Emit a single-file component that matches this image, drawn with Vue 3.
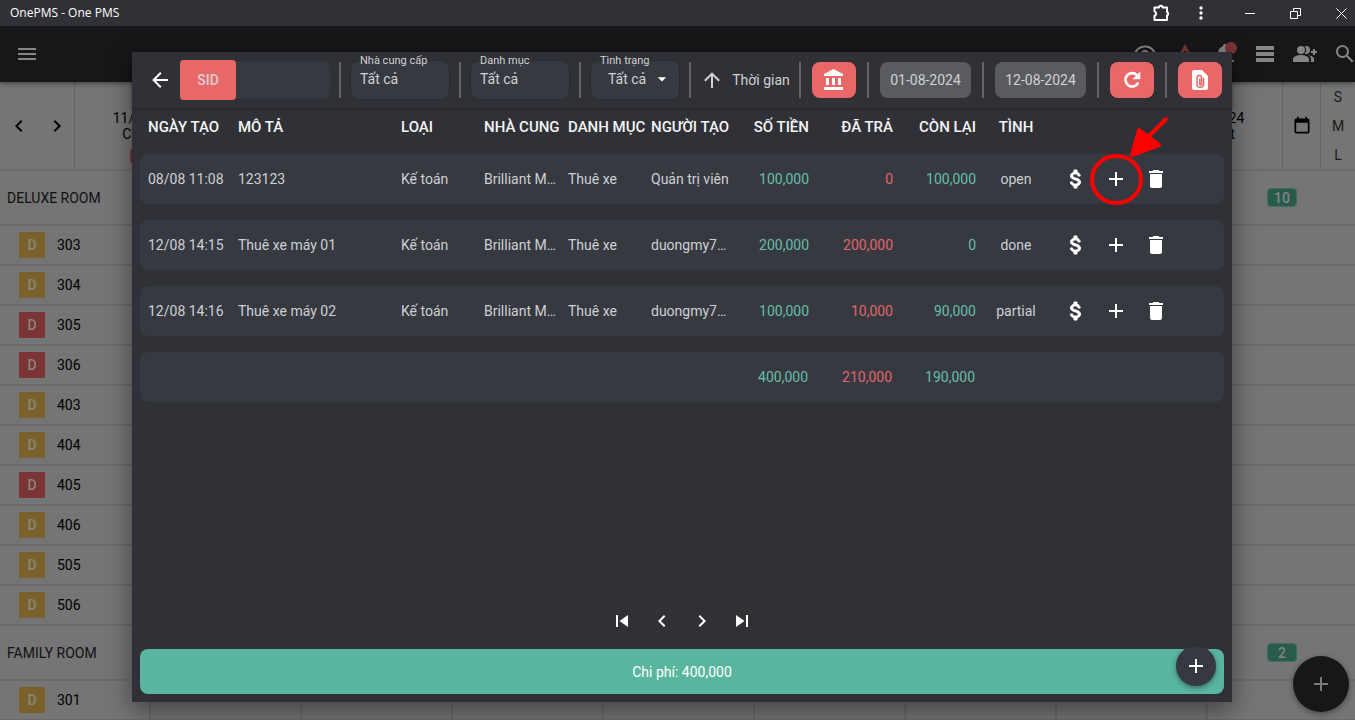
<script setup>
import { ref } from 'vue'

const icons = {
  menu: 'M3 6h18v2H3V6m0 5h18v2H3v-2m0 5h18v2H3v-2z',
  back: 'M20 11v2H8l5.5 5.5-1.42 1.42L4.16 12l7.92-7.92L13.5 5.5 8 11h12z',
  up: 'M13 20h-2V8l-5.5 5.5-1.42-1.42L12 4.16l7.92 7.92-1.42 1.42L13 8v12z',
  left: 'M15.41 16.58L10.83 12l4.58-4.59L14 6l-6 6 6 6 1.41-1.42z',
  right: 'M8.59 16.58L13.17 12 8.59 7.41 10 6l6 6-6 6-1.41-1.42z',
  first: 'M6 18V6h2v12H6m3.5-6L18 6v12l-8.5-6z',
  last: 'M16 18h2V6h-2M6 18l8.5-6L6 6v12z',
  bank: 'M11.5 1L2 6v2h19V6M16 10v7h3v-7M2 22h19v-3H2m8-9v7h3v-7M4 10v7h3v-7H4z',
  dollar: 'M11.8 10.9c-2.27-.59-3-1.2-3-2.15 0-1.09 1.01-1.85 2.7-1.85 1.78 0 2.44.85 2.5 2.1h2.21c-.07-1.72-1.12-3.3-3.21-3.81V3h-3v2.16c-1.94.42-3.5 1.68-3.5 3.61 0 2.31 1.91 3.46 4.7 4.13 2.5.6 3 1.48 3 2.41 0 .69-.49 1.79-2.7 1.79-2.06 0-2.87-.92-2.98-2.1h-2.2c.12 2.19 1.76 3.42 3.68 3.83V21h3v-2.15c1.95-.37 3.5-1.5 3.5-3.55 0-2.84-2.43-3.81-4.7-4.4z',
  plus: 'M19 13h-6v6h-2v-6H5v-2h6V5h2v6h6v2z',
  trash: 'M19 4h-3.5l-1-1h-5l-1 1H5v2h14M6 19a2 2 0 0 0 2 2h8a2 2 0 0 0 2-2V7H6v12z',
  calendar: 'M19 19H5V8h14m0-5h-1V1h-2v2H8V1H6v2H5c-1.11 0-2 .89-2 2v14a2 2 0 0 0 2 2h14a2 2 0 0 0 2-2V5a2 2 0 0 0-2-2z',
  eye: 'M12 8a4 4 0 1 1 0 8 4 4 0 0 1 0-8m0-4.500c5 0 9.270 3.110 11 7.500-1.730 4.390-6 8.500-11 8.500S2.730 15.390 1 11C2.730 6.610 7 3.500 12 3.500m0 2c-3.790 0-7 2.200-8.600 5.500C5 14.300 8.200 17 12 17s7-2.700 8.600-6C19 7.700 15.800 5.500 12 5.500z',
  alert: 'M13 14h-2V9h2m0 9h-2v-2h2M1 21h22L12 2 1 21z',
  bell: 'M21 19v1H3v-1l2-2v-6c0-3.100 2.030-5.830 5-6.710V4a2 2 0 0 1 4 0v.29c2.970.88 5 3.610 5 6.710v6l2 2m-7 2a2 2 0 0 1-4 0',
  list: 'M3 4h18v4H3V4m0 6h18v4H3v-4m0 6h18v4H3v-4z',
  people: 'M24 9h-2V7h-2v2h-2v2h2v2h2v-2h2M8 4a4 4 0 1 0 0 8 4 4 0 0 0 0-8m5 0c-.5 0-.9.1-1.300.2a6 6 0 0 1 0 7.600c.4.1.8.2 1.300.2a4 4 0 0 0 0-8M8 13c-2.670 0-8 1.340-8 4v3h16v-3c0-2.660-5.330-4-8-4m7.600.2c1.400.9 2.400 2.100 2.400 3.800v3h3v-3c0-2.100-2.800-3.300-5.400-3.800z',
  search: 'M9.500 3A6.500 6.500 0 0 1 16 9.500c0 1.610-.59 3.090-1.560 4.230l.27.27h.79l5 5-1.500 1.500-5-5v-.79l-.27-.27A6.500 6.500 0 1 1 9.500 3m0 2a4.500 4.500 0 1 0 0 9 4.500 4.500 0 0 0 0-9z',
  caret: 'M7 10l5 5 5-5H7z',
  dots: 'M12 16a2 2 0 1 1 0 4 2 2 0 0 1 0-4m0-6a2 2 0 1 1 0 4 2 2 0 0 1 0-4m0-6a2 2 0 1 1 0 4 2 2 0 0 1 0-4z'
}

const sid = ref('')
const supplier = ref('Tất cả')
const category = ref('Tất cả')
const status = ref('all')

const appActions = [
  { id: 'eye', label: 'Xem' },
  { id: 'alert', label: 'Cảnh báo' },
  { id: 'bell', label: 'Thông báo' },
  { id: 'list', label: 'Danh sách' },
  { id: 'people', label: 'Thêm khách' },
  { id: 'search', label: 'Tìm kiếm' }
]

const days = [['11/08/2024', 'Chủ nhật'], [], [], [], [], [], [], ['18/08/2024', 'Chủ nhật']]

const groups = [
  {
    name: 'DELUXE ROOM', free: 10,
    rooms: [['303'], ['304'], ['305', 1], ['306', 1], ['403'], ['404'], ['405', 1], ['406'], ['505'], ['506']]
  },
  { name: 'FAMILY ROOM', free: 2, rooms: [['301']] }
]

const headers = ['NGÀY TẠO', 'MÔ TẢ', 'LOẠI', 'NHÀ CUNG', 'DANH MỤC', 'NGƯỜI TẠO', 'SỐ TIỀN', 'ĐÃ TRẢ', 'CÒN LẠI', 'TÌNH']
const rows = [
  ['08/08 11:08', '123123', 'Kế toán', 'Brilliant Motor', 'Thuê xe', 'Quản trị viên', '100,000', '0', '100,000', 'open'],
  ['12/08 14:15', 'Thuê xe máy 01', 'Kế toán', 'Brilliant Motor', 'Thuê xe', 'duongmy7100', '200,000', '200,000', '0', 'done'],
  ['12/08 14:16', 'Thuê xe máy 02', 'Kế toán', 'Brilliant Motor', 'Thuê xe', 'duongmy7100', '100,000', '10,000', '90,000', 'partial']
]
const rowActions = [['dollar', 'Thanh toán'], ['plus', 'Thêm'], ['trash', 'Xóa']]
const pager = [['first', 'Trang đầu'], ['left', 'Trang trước'], ['right', 'Trang sau'], ['last', 'Trang cuối']]

const cellClass = (i) => ({ num: i > 5 && i < 9, paid: i === 7, status: i === 9 })
</script>

<template>
  <div class="window">
    <header class="titlebar">
      <span class="title">OnePMS - One PMS</span>
      <button class="ext" aria-label="Tiện ích">
        <svg width="20" height="20" viewBox="0 0 20 20" fill="none" stroke="#fff" stroke-width="2" stroke-linejoin="round">
          <path d="M3.500 4.500h4.500a1.800 1.800 0 0 1 3.600 0h4.400v4.500a1.800 1.800 0 0 1 0 3.400v4.600h-12.500v-4.200a2.300 2.300 0 0 0 0-4.400z" />
        </svg>
      </button>
      <button class="ext" aria-label="Menu"><svg width="20" height="20" viewBox="0 0 24 24"><path :d="icons.dots" /></svg></button>
      <button class="win" aria-label="Thu nhỏ"><svg width="11" height="11"><path d="M0 5h10v1H0z" /></svg></button>
      <button class="win" aria-label="Khôi phục">
        <svg width="11" height="11" fill="none" stroke="#fff"><path d="M.5 3.500h7v7h-7zM3.500 3.500v-3h7v7h-3" /></svg>
      </button>
      <button class="win close" aria-label="Đóng">
        <svg width="11" height="11" stroke="#fff"><path d="M.5.5l10 10M10.500.5l-10 10" /></svg>
      </button>
    </header>

    <div class="stage">
      <div class="board">
        <nav class="appbar">
          <button class="appbtn" aria-label="Menu chính"><svg class="i" viewBox="0 0 24 24"><path :d="icons.menu" /></svg></button>
          <span class="grow"></span>
          <button v-for="a in appActions" :key="a.id" class="appbtn" :class="a.id" :aria-label="a.label">
            <svg class="i" viewBox="0 0 24 24"><path :d="icons[a.id]" /></svg>
            <span v-if="a.id === 'bell'" class="dot"></span>
          </button>
        </nav>

        <div class="days">
          <div class="arrows">
            <button aria-label="Tuần trước"><svg class="i" viewBox="0 0 24 24"><path :d="icons.left" /></svg></button>
            <button aria-label="Tuần sau"><svg class="i" viewBox="0 0 24 24"><path :d="icons.right" /></svg></button>
          </div>
          <div v-for="(d, i) in days" :key="i" class="day">
            <span>{{ d[0] }}</span><span>{{ d[1] }}</span>
            <span v-if="i === 0" class="daybadge"></span>
          </div>
          <button class="cal" aria-label="Chọn ngày"><svg viewBox="0 0 24 24"><path :d="icons.calendar" /></svg></button>
          <div class="sizes"><button>S</button><button>M</button><button>L</button></div>
        </div>

        <template v-for="g in groups" :key="g.name">
          <div class="group">
            <span class="gname">{{ g.name }}</span>
            <span class="free">{{ g.free }}</span>
          </div>
          <div v-for="r in g.rooms" :key="r[0]" class="room">
            <div class="rname"><span class="tag" :class="{ busy: r[1] }">D</span>{{ r[0] }}</div>
            <div v-for="(d, i) in days" :key="i" class="slot"></div>
          </div>
        </template>
      </div>

      <button class="pagefab" aria-label="Tạo mới"><svg class="i" viewBox="0 0 24 24"><path :d="icons.plus" /></svg></button>

      <section class="dialog" role="dialog" aria-label="Chi phí">
        <div class="toolbar">
          <button class="back" aria-label="Quay lại"><svg class="i" viewBox="0 0 24 24"><path :d="icons.back" /></svg></button>
          <div class="searchbox">
            <button class="sid">SID</button>
            <input v-model="sid" type="text" aria-label="SID" />
          </div>
          <i class="sep"></i>
          <div class="field">
            <label for="supplier">Nhà cung cấp</label>
            <input id="supplier" v-model="supplier" type="text" />
          </div>
          <i class="sep"></i>
          <div class="field">
            <label for="category">Danh mục</label>
            <input id="category" v-model="category" type="text" />
          </div>
          <i class="sep"></i>
          <div class="field short">
            <label for="status">Tình trạng</label>
            <select id="status" v-model="status"><option value="all">Tất cả</option></select>
            <svg class="caret" viewBox="0 0 24 24"><path :d="icons.caret" /></svg>
          </div>
          <i class="sep"></i>
          <button class="sort"><svg class="i" viewBox="0 0 24 24"><path :d="icons.up" /></svg>Thời gian</button>
          <i class="sep endl"></i>
          <button class="red" aria-label="Ngân hàng"><svg class="i" viewBox="0 0 24 24"><path :d="icons.bank" /></svg></button>
          <i class="sep wide"></i>
          <button class="date">01-08-2024</button>
          <i class="sep wide"></i>
          <button class="date">12-08-2024</button>
          <i class="sep wide"></i>
          <button class="red" aria-label="Tải lại">
            <svg class="i" viewBox="0 0 24 24" fill="none"><path d="M18.300 14.500a6.700 6.700 0 1 1-1.300-7.300" fill="none" stroke="#fff" stroke-width="2.600" /><path d="M20.300 3.500v7.800h-7.800z" /></svg>
          </button>
          <i class="sep wide"></i>
          <button class="red" aria-label="Tệp đính kèm">
            <svg class="i" viewBox="0 0 24 24">
              <path d="M6 2h8l6 6v12a2 2 0 0 1-2 2H6a2 2 0 0 1-2-2V4a2 2 0 0 1 2-2z" />
              <path d="M11.800 10.500v5.700a.9.9 0 0 0 1.800 0V9.700a2.300 2.300 0 0 0-4.600 0v6.200a3.300 3.300 0 0 0 6.600 0v-6" fill="none" stroke="#ea6767" stroke-width="1.500" />
            </svg>
          </button>
        </div>

        <table>
          <thead>
            <tr>
              <th v-for="(h, i) in headers" :key="h" :class="cellClass(i)">{{ h }}</th>
            </tr>
          </thead>
          <tbody>
            <tr v-for="r in rows" :key="r[0]">
              <td v-for="(c, i) in r" :key="i" :class="cellClass(i)">{{ c }}</td>
              <td v-for="a in rowActions" :key="a[0]" class="act">
                <button :aria-label="a[1]"><svg class="i" :class="a[0]" viewBox="0 0 24 24"><path :d="icons[a[0]]" /></svg></button>
              </td>
            </tr>
            <tr class="total">
              <td class="blank"></td>
              <td class="num">400,000</td><td class="num paid">210,000</td><td class="num">190,000</td>
            </tr>
          </tbody>
        </table>

        <div class="pager">
          <button v-for="p in pager" :key="p[0]" :aria-label="p[1]"><svg class="i" viewBox="0 0 24 24"><path :d="icons[p[0]]" /></svg></button>
        </div>

        <div class="sum">Chi phí: 400,000</div>
        <button class="fab" aria-label="Thêm chi phí"><svg class="i" viewBox="0 0 24 24"><path :d="icons.plus" /></svg></button>

        <svg class="mark" width="84" height="92" viewBox="0 0 84 92" fill="none" stroke="#f00" stroke-width="4" stroke-linecap="round" stroke-linejoin="round">
          <ellipse cx="28.500" cy="65.500" rx="24.500" ry="23.500" />
          <path d="M78 5L61 22" />
          <path d="M51 16L71 31L44 41z" fill="#f00" />
        </svg>
      </section>
    </div>
  </div>
</template>

<style>
html, body, #app { height: 100%; }
body { margin: 0; overflow: hidden; }
</style>

<style scoped>
.window {
  height: 100%;
  display: flex;
  flex-direction: column;
  font: 14px/16px Roboto, "Noto Sans", sans-serif;
  color: #000;
}
button {
  font: inherit;
  color: inherit;
  background: none;
  border: 0;
  padding: 0;
  display: flex;
  align-items: center;
  justify-content: center;
}
svg { fill: currentColor; flex: none; display: block; }
svg[fill="none"] { fill: none; }
.i { width: 24px; height: 24px; }
.i path:not([fill]) { fill: currentColor; }

.titlebar {
  height: 26px;
  flex: none;
  display: flex;
  align-items: center;
  background: #303136;
  color: #fff;
}
.title { flex: 1; padding-left: 10px; font: 12px/16px "Open Sans", "Noto Sans", sans-serif; }
.ext { width: 40px; height: 26px; }
.win { width: 45px; height: 26px; }
.ext + .win { margin-left: 7px; }
.close { width: 28px; margin-left: 9px; }

.stage { position: relative; flex: 1; min-height: 0; overflow: hidden; background: #757575; }
.board { display: flex; flex-direction: column; height: 100%; overflow: hidden; }
.appbar {
  position: relative;
  height: 56px;
  flex: none;
  display: flex;
  align-items: center;
  padding-left: 7px;
  background: #171719;
  color: #858585;
  box-shadow: 0 1px 5px rgba(0, 0, 0, .5);
}
.grow { flex: 1; }
.appbtn { position: relative; width: 40px; height: 40px; flex: none; }
.search { margin-right: -10px; }
.alert { color: #7a3434; }
.dot { position: absolute; top: 8px; right: 8px; width: 12px; height: 12px; border-radius: 50%; background: #7a3434; }

.days { height: 87px; flex: none; display: flex; border-bottom: 2px solid #6b6b6b; }
.arrows { width: 75px; flex: none; display: flex; align-items: center; justify-content: space-between; padding: 0 5px 0 7px; box-sizing: border-box; border-right: 1px solid #626262; }
.day {
  flex: 1;
  display: flex;
  flex-direction: column;
  align-items: center;
  padding-top: 28px;
  border-right: 1px solid #626262;
}
.daybadge { width: 40px; height: 16px; margin-top: 6px; border-radius: 4px; background: #7a3434; }
.cal { width: 38px; border-right: 1px solid #626262; box-sizing: border-box; }
.cal svg { width: 20px; height: 20px; }
.sizes { width: 34px; display: flex; flex-direction: column; }
.sizes button { flex: 1; color: #1a1a1a; }

.group { height: 53px; flex: none; display: flex; align-items: center; justify-content: space-between; border-bottom: 2px solid #6b6b6b; padding: 0 58px 0 7px; color: #111; }
.free { width: 30px; height: 19px; box-sizing: border-box; border: 1px solid #3c6d60; border-radius: 4px; background: #295b4d; color: #858585; line-height: 18px; text-align: center; font-weight: 500; }
.room { height: 40px; flex: none; display: flex; box-sizing: border-box; border-bottom: 2px solid #6b6b6b; }
.rname { width: 149px; flex: none; display: flex; align-items: center; padding-left: 19px; box-sizing: border-box; }
.tag { width: 26px; height: 26px; margin-right: 12px; background: #7a612c; color: #8a8578; line-height: 26px; text-align: center; font-weight: 500; }
.tag.busy { background: #7a3434; }
.slot { width: 149px; flex: none; border-left: 2px solid #6b6b6b; }

.pagefab { position: absolute; right: 6px; bottom: 8px; width: 56px; height: 56px; border-radius: 50%; background: #171719; color: #7b7b7b; box-shadow: 0 2px 6px rgba(0, 0, 0, .4); }

.dialog {
  position: absolute;
  inset: 26px 123px 18px 132px;
  display: flex;
  flex-direction: column;
  background: #303136;
  color: #fff;
  box-shadow: 0 8px 24px rgba(0, 0, 0, .45);
}
.toolbar {
  height: 56px;
  flex: none;
  display: flex;
  align-items: center;
  padding-right: 10px;
  color: #d0d1d3;
  box-shadow: 0 1px 3px rgba(0, 0, 0, .35);
}
.back { width: 24px; margin: 0 8px 0 16px; color: #fff; }
.searchbox { flex: 1; min-width: 0; display: flex; align-items: center; }
.searchbox input { flex: 1; min-width: 0; height: 38px; box-sizing: border-box; border: 0; border-radius: 0 8px 8px 0; background: #373941; color: inherit; font: inherit; }
.sid { width: 56px; height: 40px; border-radius: 4px; background: #ea6767; font-weight: 500; color: #d6cfd0; }
.sep { width: 2px; height: 36px; flex: none; margin: 0 9px; background: #636468; }
.sep.endl { margin: 0 11px 0 9px; }
.sep.wide { margin: 0 11px; }
.field { position: relative; width: 100px; height: 40px; flex: none; }
.field.short { width: 90px; }
.field input, .field select {
  width: 100%;
  height: 100%;
  box-sizing: border-box;
  appearance: none;
  padding: 0 9px 2px;
  border: 1px solid #2b2c31;
  border-radius: 8px;
  background: #373941;
  color: inherit;
  font: inherit;
}
.field select { padding-left: 17px; }
.field label { position: absolute; left: 6px; top: -5px; padding: 0 4px; font-size: 11px; line-height: 12px; background: linear-gradient(#303136 60%, #373941 60%); }
.caret { position: absolute; right: 8px; top: 9px; width: 20px; height: 20px; color: #fff; pointer-events: none; }
.sort { width: 90px; flex: none; gap: 8px; white-space: nowrap; }
.red { width: 44px; height: 36px; flex: none; border-radius: 8px; background: #ea6767; color: #fff; }
.date { width: 91px; height: 36px; flex: none; border-radius: 8px; background: #5a5b5f; }

table { display: block; flex: 1; padding: 0 8px; color: #ced0d3; }
thead, tbody { display: block; }
tr { display: grid; grid-template-columns: 90px minmax(0, 1fr) 83px 84px 83px 86px 80px 84px 83px 80px 40px 40px 88px; align-items: center; }
th, td { padding: 0 0 0 8px; text-align: left; white-space: nowrap; }
td { overflow: hidden; text-overflow: ellipsis; }
thead tr { height: 38px; margin-bottom: 8px; }
th { font-size: 15px; font-weight: 500; color: #f4f4f5; line-height: 20px; }
th.num, td.num { text-align: right; }
tbody tr { height: 50px; margin-bottom: 16px; border-radius: 8px; background: #373941; }
td.num { color: #65bfa8; }
td.paid { color: #e26568; }
th.status, td.status { text-align: center; padding: 0 8px; }
.act { padding: 0; color: #fff; }
.act button { width: 40px; height: 40px; }
.dollar { stroke: currentColor; stroke-width: 1; }
.blank { grid-column: span 6; }
.total .num { padding-right: 1px; }

.pager { display: flex; justify-content: center; margin-bottom: 8px; }
.pager button { width: 40px; height: 40px; }
.sum { height: 45px; margin: 0 8px 8px; flex: none; border-radius: 8px; background: #59b59e; line-height: 46px; text-align: center; }
.fab { position: absolute; right: 16px; bottom: 16px; width: 40px; height: 40px; border-radius: 50%; background: #373941; box-shadow: 0 2px 5px rgba(0, 0, 0, .4); }
.mark { position: absolute; top: 62px; right: 60px; pointer-events: none; }
.mark ellipse, .mark path:not([fill]) { fill: none; }
</style>
